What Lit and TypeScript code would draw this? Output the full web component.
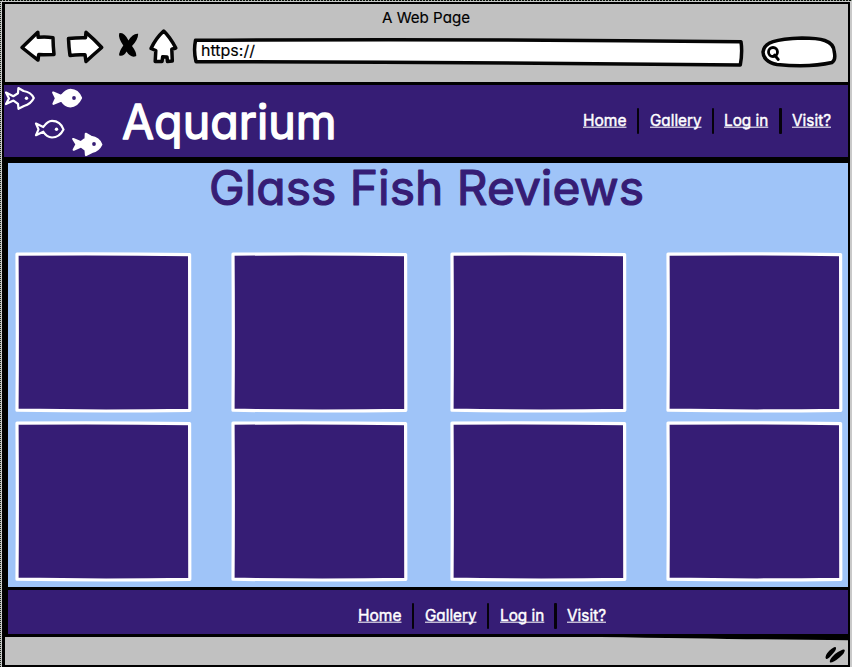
import { LitElement, html, svg, css } from "lit";
import { customElement, property } from "lit/decorators.js";

/* A run of text fitted to the given width, with rounded stroke ends. */
@customElement("marker-text")
class MarkerText extends LitElement {
  @property() text = "";
  @property({ type: Number }) width = 40;
  @property({ type: Number }) size = 16;
  @property({ type: Number }) weight = 0.3;
  @property({ type: Boolean }) underline = false;

  static styles = css`
    :host { display: block; flex: none; }
    svg { display: block; overflow: visible; }
    text {
      font-family: Inter, "Liberation Sans", sans-serif;
      font-feature-settings: "cv11" 1;
      fill: currentColor;
      stroke: currentColor;
      stroke-linejoin: round;
      white-space: pre;
    }
    line { stroke: currentColor; stroke-width: 1; }
  `;

  render() {
    const base = this.size;
    return html`<svg width=${this.width} height=${Math.round(this.size * 1.25)}>
      <text x="0" y=${base} font-size=${this.size} stroke-width=${this.weight}
        textLength=${this.width} lengthAdjust="spacingAndGlyphs">${this.text}</text>
      ${this.underline ? svg`<line x1="0" x2=${this.width} y1=${base + 1.5} y2=${base + 1.5}></line>` : null}
    </svg>`;
  }
}

@customElement("link-row")
class LinkRow extends LitElement {
  static styles = css`
    :host { display: flex; align-items: flex-start; gap: 10.4px; color: #fff; }
    marker-text { margin-top: 2px; }
    i { width: 2.5px; height: 26px; border-radius: 1px; background: #05020a; flex: none; }
  `;
  render() {
    const links: [string, number][] = [["Home", 43.5], ["Gallery", 51.5], ["Log in", 44.3], ["Visit?", 39]];
    return links.map(([label, w], n) => html`
      ${n ? html`<i></i>` : null}
      <marker-text .text=${label} .width=${w} .size=${15.7} .weight=${0.45} underline></marker-text>`);
  }
}

@customElement("app-root")
class AppRoot extends LitElement {
  static styles = css`
    :host { display: block; width: 852px; height: 667px; overflow: hidden; }
    * { box-sizing: border-box; }
    svg { display: block; overflow: visible; }
    .page {
      width: 852px; height: 667px; padding: 2px 2px 0 2px; background:
        repeating-linear-gradient(90deg, #0a0f0a 0 2px, #9aa69a 2px 3px) 0 0 / 852px 1px no-repeat,
        repeating-linear-gradient(180deg, #222 0 1px, #b8c4b8 1px 2px) 0 0 / 1px 667px no-repeat,
        linear-gradient(#c9c9c9, #c9c9c9);
    }
    .frame {
      height: 665px; display: flex; flex-direction: column;
      background: #000; padding: 2px 2px 2px 3px;
    }
    .bar { height: 78px; background: #c1c1c1; display: flex; flex-direction: column; flex: none; }
    .caption { display: flex; justify-content: center; height: 27px; padding: 4px 1px 0 0; }
    .tools { display: flex; height: 51px; }
    .nav-icons { width: 188px; flex: none; }
    .address { width: 553px; flex: none; display: grid; }
    .address > * { grid-area: 1 / 1; }
    .address marker-text { margin: 10px 0 0 8px; }
    .search { width: 100px; flex: none; }
    .header {
      height: 72px; margin: 3px 0 0 -1px; background: #361d75; color: #fff; flex: none;
      display: flex; align-items: flex-start;
    }
    .logo { width: 118px; flex: none; }
    .brand { margin-top: 6px; }
    .header link-row { margin: 23px 17px 0 auto; }
    .content {
      height: 424px; margin: 6px 0 0 3px; background: #9fc4f8; flex: none;
      display: flex; flex-direction: column;
    }
    .title { color: #361d75; margin: -6.5px 0 0 201px; height: 95.5px; }
    .cards { display: grid; grid-template-columns: 216px 219px 216px 177px; row-gap: 9px; margin-left: 7px; }
    .footer {
      height: 44px; margin: 3px 0 0 3px; background: #361d75; flex: none; padding: 13px 0 0 350px;
    }
    .status { flex: 1; margin: 3px 0 0; background: #c1c1c1; }
    .ink { fill: #fff; stroke: #050505; stroke-width: 3.5; stroke-linejoin: round; stroke-linecap: round; }
    .line { fill: none; stroke: #000; stroke-width: 2.8; stroke-linecap: round; }
    .fish { fill: #361d75; stroke: #fff; stroke-width: 2.2; stroke-linejoin: round; }
    .solid { fill: #fff; }
    .eye { fill: #fff; }
    .eye-dark { fill: #361d75; }
    .card { fill: #361d75; stroke: #fff; stroke-width: 3.2; stroke-linejoin: round; }
    .wedge { fill: #000; }
  `;

  card() {
    return html`<svg width="177" height="160" viewBox="0 0 177 160">
      <path class="card" d="M2 2.2 Q88 1.4 174.6 2.6 Q174.4 80 174.8 158.3 Q88 159.7 2 158.2 Q2.6 80 2 2.2Z"></path>
    </svg>`;
  }

  render() {
    return html`
      <div class="page"><div class="frame">
        <div class="bar">
          <div class="caption"><marker-text .text=${"A Web Page"} .width=${88} .size=${15} .weight=${0.15}></marker-text></div>
          <div class="tools">
            <svg class="nav-icons" width="188" height="51" viewBox="5 31 188 51">
              <path class="ink" d="M22 47.5 L37.8 32.3 L38.2 37.3 Q46 36.6 53 37.7 Q53.1 46 54 54.5 Q46 54.7 38.7 54.6 L38 60 Q30 54 22 47.5Z"></path>
              <path class="ink" d="M68.5 38.5 Q77 37.5 85.5 37.7 L86 32.3 Q95 40 101.7 47.5 Q93 55 86 61.5 L85 54.8 Q77 54.3 70 55.5 Q68.8 47 68.5 38.5Z"></path>
              <path d="M119.2 33.3 Q124 31.5 128.5 40.5 Q133 33 138.2 33.8 Q138 40 132 46 Q136.5 52 136.3 56 Q131 58.5 126.5 51.5 Q123.5 57 119.2 55.5 Q118.7 52 123.3 45.5 Q118 38 119.2 33.3Z"></path>
              <path class="ink" d="M163.7 31 Q170 37 175.8 48 L171.8 49.2 L172.3 61 L167.5 61.5 L167 57 L162.7 56.8 L162 61.5 L155.2 61.5 L155.8 50.5 L151 48.5 Q156 38 163.7 31Z"></path>
            </svg>
            <div class="address">
              <svg width="553" height="51" viewBox="193 31 553 51">
                <path class="ink" d="M195.5 40.3 Q470 38.5 741 41.8 Q742.6 52 740.3 65 Q470 62 196 61.7 Q193.4 51 195.5 40.3Z"></path>
              </svg>
              <marker-text .text=${"https://"} .width=${54} .size=${15} .weight=${0.15}></marker-text>
            </div>
            <svg class="search" width="100" height="51" viewBox="746 31 100 51">
              <path class="ink" d="M763 52 C764 42 776 39 802 38 C820 38 834 40 834.3 52 Q836 60 832 62.5 C817 66 795 66.2 777 64.5 C767 63 763 57 763 52Z"></path>
              <circle class="line" cx="773" cy="52" r="4.5"></circle>
              <path class="line" d="M774.5 55 L778.3 59.5"></path>
            </svg>
          </div>
        </div>

        <div class="header">
          <svg class="logo" width="118" height="72" viewBox="4 85 118 72">
            <path class="fish" d="M6 92.5 L13.3 96.2 L18 93.2 L18.4 88 L23.5 91 Q31 92 33.8 98 Q31 104 24 106 L18.5 108.8 L18 103.8 L13.5 100.6 L6 104 L9 98.5Z"></path>
            <circle class="eye" cx="26.5" cy="98.2" r="1.7"></circle>
            <path class="fish solid" d="M53.2 92.5 L61.3 96 Q66 89.8 70.5 89.8 Q78 90 81 98 Q77 106.3 70.5 106.3 Q65 106 61.5 100.4 L53.5 103.8 L56 98.3Z"></path>
            <circle class="eye-dark" cx="74" cy="98" r="1.9"></circle>
            <path class="fish" d="M36 123.5 L43.3 127 Q47.5 120.9 52 120.9 Q60.5 121 63.5 129.5 Q59.5 137.5 52 137.5 Q46.5 137 43.3 131.7 L36 135.2 L38.5 129.4Z"></path>
            <circle class="eye" cx="56.5" cy="129.3" r="1.7"></circle>
            <path class="fish solid" d="M73.2 139 L81 142.2 L85.6 138.6 L85.8 133.8 L91 136.8 Q99 138 101.3 144.5 Q98.5 150.5 92 152 L86 155 L85.6 150 L81 146.4 L73.7 149.7 L76.6 144.3Z"></path>
            <circle class="eye-dark" cx="94" cy="144" r="1.9"></circle>
          </svg>
          <marker-text class="brand" .text=${"Aquarium"} .width=${214.5} .size=${48} .weight=${1.4}></marker-text>
          <link-row></link-row>
        </div>

        <div class="content">
          <div class="title"><marker-text .text=${"Glass Fish Reviews"} .width=${435} .size=${48} .weight=${1.2}></marker-text></div>
          <div class="cards">${Array.from({ length: 8 }, () => this.card())}</div>
        </div>

        <div class="footer"><link-row></link-row></div>

        <div class="status">
          <svg width="843" height="27" viewBox="5 637 843 27">
            <path class="wedge" d="M600 636 L848 636 L848 640.3 Q760 639.5 600 637Z"></path>
            <path d="M826 659 Q824 656 829.5 650.5 Q835 645.5 836 647.5 Q836.5 650 833 653.5 Q828 659.5 826 659Z"></path>
            <path d="M830 662.5 Q828.5 660 835 654 Q843.5 648 844.8 650 Q845 653 839.5 657.5 Q833 663 830 662.5Z"></path>
          </svg>
        </div>
      </div></div>`;
  }
}
